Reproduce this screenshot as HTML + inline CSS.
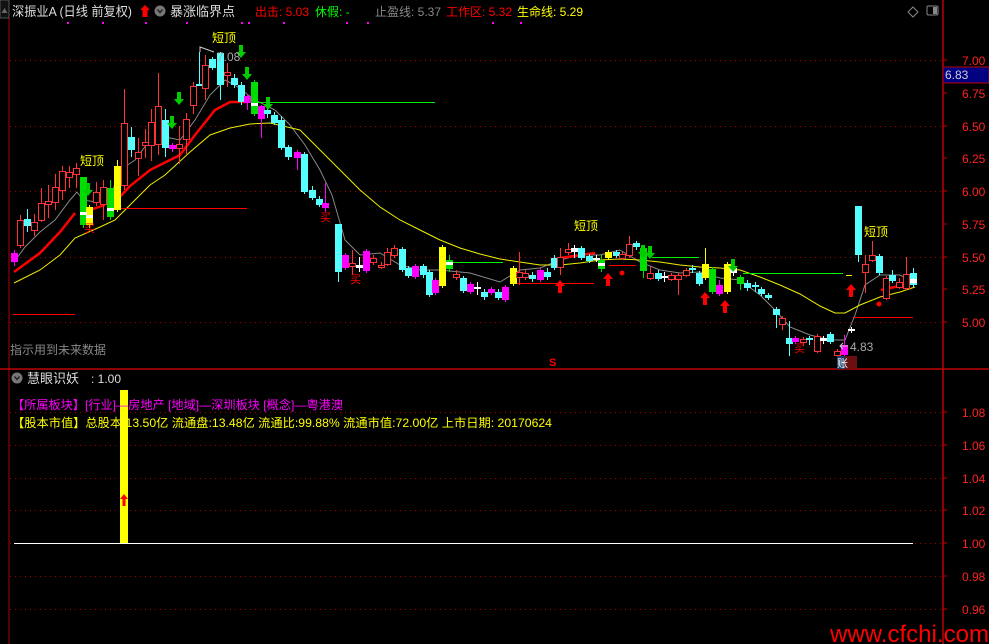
<!DOCTYPE html><html><head><meta charset="utf-8"><style>
html,body{margin:0;padding:0;background:#000;width:989px;height:644px;overflow:hidden}
svg{display:block}
text{font-family:"Liberation Sans","Noto Sans CJK SC",sans-serif}
</style></head><body>
<svg id="s" width="989" height="644" xmlns="http://www.w3.org/2000/svg">
<rect width="989" height="644" fill="#000"/>
<g id="grid"></g>
<g id="lines"></g>
<g id="c"></g>
<g id="ov"></g>
<line x1="9" y1="0" x2="9" y2="644" stroke="#b00000"/>
<line x1="943" y1="0" x2="943" y2="644" stroke="#c00000" stroke-width="1.5"/>
<line x1="0" y1="369" x2="989" y2="369" stroke="#c00000" stroke-width="1.5"/>
<rect x="0" y="0" width="9" height="18" fill="#111" stroke="#555"/>
<path d="M1.5 13 L4.5 8 L7.5 13Z" fill="#666"/>
<text x="12" y="16" font-size="13" fill="#ddd" textLength="120" lengthAdjust="spacingAndGlyphs">深振业A (日线 前复权)</text>
<path d="M145 5 L150 10 L147.5 10 L147.5 17 L142.5 17 L142.5 10 L140 10Z" fill="#f00"/>
<circle cx="160" cy="11" r="5.5" fill="#777"/><path d="M157.5 9.5 L160 12.5 L162.5 9.5" stroke="#222" stroke-width="1.4" fill="none"/>
<text x="170" y="16" font-size="13" fill="#ddd">暴涨临界点</text>
<text x="255" y="16" font-size="12" fill="#f00">出击: 5.03</text>
<text x="315" y="16" font-size="12" fill="#0f0">休假: -</text>
<text x="375" y="16" font-size="12" fill="#888">止盈线: 5.37</text>
<text x="446" y="16" font-size="12" fill="#f00">工作区: 5.32</text>
<text x="517" y="16" font-size="12" fill="#ff0">生命线: 5.29</text>
<g fill="#f0f"><rect x="67" y="22" width="2" height="2"/><rect x="102" y="22" width="2" height="2"/><rect x="145" y="22" width="2" height="2"/><rect x="186" y="22" width="2" height="2"/><rect x="241" y="22" width="2" height="2"/><rect x="248" y="22" width="2" height="2"/><rect x="283" y="22" width="2" height="2"/><rect x="346" y="22" width="2" height="2"/><rect x="367" y="22" width="2" height="2"/><rect x="492" y="22" width="2" height="2"/><rect x="520" y="22" width="2" height="2"/></g>
<path d="M913 7 L918 12 L913 17 L908 12Z" fill="none" stroke="#888"/>
<rect x="927" y="6" width="11" height="9" rx="1.5" fill="none" stroke="#888"/><rect x="933" y="7" width="4" height="7" fill="#888"/>
<g id="ax" font-size="12" fill="#f22"></g>
<rect x="943" y="67" width="46" height="16" fill="#000080" stroke="#c00000"/>
<text x="945" y="79" font-size="12" fill="#ccd">6.83</text>
<g font-size="12" fill="#ff0"><text x="80" y="165">短顶</text><text x="212" y="42">短顶</text><text x="574" y="230">短顶</text><text x="864" y="236">短顶</text></g>
<g font-size="11" fill="#f00"><text x="84" y="232">买</text><text x="320" y="221">买</text><text x="350" y="283">买</text><text x="794" y="352">买</text></g>
<text x="217" y="61" font-size="12" fill="#aaa">7.08</text>
<path d="M200 52 L200 47 L214 52" stroke="#ccc" fill="none"/>
<text x="850" y="351" font-size="12" fill="#aaa">4.83</text>
<path d="M848 346 L840 346 M843 343 L840 346 L843 349" stroke="#ccc" fill="none"/>
<text x="549" y="366" font-size="11" fill="#f00" font-weight="bold">S</text>
<rect x="837" y="356" width="8" height="13" fill="#1a3a6a"/><rect x="845" y="356" width="12" height="13" fill="#6a1010"/>
<text x="837" y="367" font-size="11" fill="#fff">账</text>
<text x="10" y="354" font-size="12" fill="#888">指示用到未来数据</text>
<circle cx="17" cy="378" r="5.5" fill="#777"/><path d="M14.5 376.5 L17 379.5 L19.5 376.5" stroke="#222" stroke-width="1.4" fill="none"/>
<text x="27" y="383" font-size="13" fill="#ddd">慧眼识妖</text>
<text x="91" y="383" font-size="12" fill="#ddd">: 1.00</text>
<rect x="120" y="390" width="8" height="154" fill="#ff0"/>
<text x="12" y="409" font-size="12" fill="#f0f" textLength="331" lengthAdjust="spacingAndGlyphs">【所属板块】[行业]—房地产 [地域]—深圳板块 [概念]—粤港澳</text>
<text x="12" y="427" font-size="12" fill="#ff0" textLength="540" lengthAdjust="spacingAndGlyphs">【股本市值】总股本:13.50亿 流通盘:13.48亿 流通比:99.88% 流通市值:72.00亿 上市日期: 20170624</text>
<rect x="120" y="416" width="8" height="3" fill="#ff0"/>
<path d="M124 494 L128 499 L125.5 499 L125.5 506 L122.5 506 L122.5 499 L120 499Z" fill="#f00"/>
<line x1="14" y1="543.5" x2="913" y2="543.5" stroke="#fff"/>
<text x="830" y="642" font-size="24" fill="#f00" textLength="159" lengthAdjust="spacingAndGlyphs">www.cfchi.com</text>
</svg>
<script>
var NS="http://www.w3.org/2000/svg";
function el(p,t,a){var e=document.createElementNS(NS,t);for(var k in a)e.setAttribute(k,a[k]);document.getElementById(p).appendChild(e);return e;}
[60,126,191,257,322].forEach(function(y){el("grid","line",{x1:10,y1:y+.5,x2:943,y2:y+.5,stroke:"#a00000","stroke-dasharray":"1 4"});});
[412,445,478,510,543,576,609].forEach(function(y){el("grid","line",{x1:10,y1:y+.5,x2:943,y2:y+.5,stroke:"#a00000","stroke-dasharray":"1 4"});});
var up=[["7.00",60],["6.75",93],["6.50",126],["6.25",158],["6.00",191],["5.75",224],["5.50",257],["5.25",289],["5.00",322]];
up.forEach(function(a){el("ax","text",{x:962,y:a[1]+5}).textContent=a[0];el("ax","line",{x1:943,y1:a[1],x2:947,y2:a[1],stroke:"#c00"});});
var lo=[["1.08",412],["1.06",445],["1.04",478],["1.02",510],["1.00",543],["0.98",576],["0.96",609]];
lo.forEach(function(a){el("ax","text",{x:962,y:a[1]+5}).textContent=a[0];el("ax","line",{x1:943,y1:a[1],x2:947,y2:a[1],stroke:"#c00"});});
function pl(pts,col,w){el("lines","polyline",{points:pts.map(function(p){return p.join(",")}).join(" "),fill:"none",stroke:col,"stroke-width":w});}
pl([[14,262],[25,247],[40,232],[55,220],[70,200],[77,192],[83,200],[96,202],[110,198],[120,170],[135,160],[150,140],[165,137],[180,140],[195,120],[210,95],[225,80],[235,85],[255,100],[275,110],[290,125],[305,145],[320,170],[332,195],[345,240],[360,255],[380,253],[400,265],[420,270],[440,270],[470,273],[500,282],[520,270],[540,268],[560,260],[580,255],[600,255],[620,250],[640,262],[660,270],[680,273],[700,272],[720,278],[740,280],[760,295],[775,310],[790,327],[810,335],[830,340],[845,340],[855,315],[865,285],[880,275],[900,275],[915,283]],"#888",1);
pl([[14,283],[40,270],[60,255],[75,238],[100,227],[115,220],[130,205],[150,185],[165,175],[190,152],[210,135],[230,128],[250,124],[270,123],[300,130],[320,150],[340,170],[360,190],[380,207],[400,220],[420,230],[440,240],[460,248],[480,254],[500,259],[520,262],[540,265],[560,265],[580,263],[600,260],[620,259],[640,260],[660,262],[680,265],[700,267],[720,268],[740,270],[760,277],[780,285],[800,294],[820,306],[835,313],[845,313],[860,305],[880,297],[900,292],[915,287]],"#ee0",1);
pl([[14,272],[40,253],[60,232],[75,213]],"#f00",2.5);
pl([[90,210],[105,205]],"#f00",2.5);
pl([[117,200],[130,186],[150,170],[170,160],[180,155],[195,135],[215,110],[230,102],[248,102]],"#f00",2.5);
pl([[560,258],[595,253]],"#f00",2.5);
pl([[881,290],[913,283]],"#f00",2.5);
function hl(x1,x2,y,c){el("lines","line",{x1:x1,y1:y+.5,x2:x2,y2:y+.5,stroke:c});}
hl(247,435,102,"#0e0");hl(110,247,208,"#f00");hl(13,75,314,"#f00");hl(449,503,262,"#0e0");hl(514,594,283,"#f00");hl(609,636,265,"#f00");hl(652,699,257,"#0e0");hl(743,843,273,"#0e0");hl(853,913,317,"#f00");hl(846,852,275,"#ee0");
var C=[[14,253,262,250,266,"m"],[20,220,245,215,248,"r"],[27,219,226,209,232,"c"],[34,222,230,214,236,"r"],[41,203,220,188,222,"r"],[48,201,204,185,218,"r"],[55,187,202,174,210,"r"],[62,171,190,166,200,"r"],[69,172,177,166,188,"r"],[76,168,174,163,188,"r"],[83,177,225,177,228,"g"],[89,207,225,205,228,"y"],[96,192,202,182,206,"r"],[103,187,204,180,220,"r"],[110,188,217,180,220,"g"],[117,166,210,160,212,"y"],[124,123,185,89,190,"r"],[131,137,150,127,157,"c"],[138,152,158,138,176,"r"],[145,142,145,129,158,"r"],[151,122,145,109,161,"r"],[158,106,144,73,155,"r"],[165,120,148,109,157,"c"],[172,145,149,143,152,"m"],[179,144,148,126,164,"r"],[186,119,139,113,154,"r"],[193,86,105,82,114,"r"],[199,84,86,52,86,"c"],[205,65,88,55,100,"r"],[212,59,68,57,70,"c"],[220,53,85,52,100,"c"],[227,72,75,63,87,"r"],[234,78,85,74,88,"c"],[241,85,102,82,105,"c"],[247,96,103,94,110,"m"],[254,82,114,80,116,"g"],[261,106,119,105,138,"m"],[267,110,114,107,118,"c"],[274,115,123,112,125,"c"],[281,120,148,116,150,"c"],[288,147,157,145,160,"c"],[297,152,158,150,170,"m"],[304,154,192,152,194,"c"],[312,190,198,186,200,"c"],[319,199,205,196,207,"c"],[325,203,208,183,212,"m"],[338,224,272,224,282,"c"],[345,255,268,253,270,"m"],[352,263,266,250,275,"r"],[359,265,268,257,272,"w"],[366,251,271,249,273,"m"],[373,258,262,255,265,"r"],[381,265,267,262,269,"r"],[387,252,264,248,266,"r"],[394,248,255,245,258,"r"],[402,249,270,247,272,"c"],[408,268,276,266,278,"c"],[415,266,277,264,279,"m"],[423,266,275,264,278,"c"],[429,272,295,270,297,"c"],[435,280,293,278,295,"m"],[442,247,286,245,288,"y"],[449,260,269,255,272,"g"],[456,274,277,270,280,"r"],[463,278,291,276,293,"c"],[470,284,292,282,294,"m"],[477,287,289,282,295,"w"],[484,292,297,289,300,"c"],[491,289,293,287,295,"m"],[498,292,298,289,300,"c"],[505,287,300,285,302,"m"],[513,268,284,266,286,"y"],[519,272,277,252,285,"r"],[525,273,277,270,280,"r"],[532,275,279,272,282,"c"],[540,270,280,268,282,"m"],[547,272,277,268,280,"c"],[554,258,268,255,270,"c"],[560,257,267,248,275,"r"],[568,249,252,243,255,"r"],[574,248,252,245,258,"w"],[581,248,258,246,260,"c"],[589,256,261,254,263,"c"],[596,258,260,255,262,"w"],[601,260,269,255,272,"g"],[608,252,258,250,260,"y"],[616,252,256,250,258,"c"],[622,254,258,252,260,"r"],[629,244,255,236,258,"r"],[636,243,247,241,250,"c"],[643,248,271,246,278,"g"],[650,273,278,267,280,"r"],[658,273,279,270,281,"c"],[664,276,278,272,282,"w"],[671,275,279,273,281,"r"],[678,275,279,273,295,"r"],[686,270,275,268,277,"r"],[692,268,270,265,273,"c"],[699,273,284,271,286,"c"],[705,264,278,248,280,"y"],[712,269,292,267,294,"g"],[719,285,294,280,296,"m"],[727,264,292,262,294,"y"],[733,268,273,262,276,"w"],[740,277,284,275,290,"g"],[747,283,288,280,291,"c"],[755,285,287,282,292,"c"],[761,289,294,287,296,"c"],[768,295,298,293,300,"c"],[776,309,315,307,328,"c"],[782,318,324,316,330,"r"],[789,338,344,321,356,"c"],[795,338,342,336,344,"m"],[803,339,342,337,346,"r"],[809,338,340,336,345,"c"],[817,336,351,334,353,"r"],[823,338,341,336,344,"w"],[830,334,342,332,344,"c"],[837,351,355,349,357,"r"],[844,345,355,335,357,"m"],[851,329,331,327,333,"w"],[858,206,255,206,262,"c"],[865,264,272,255,293,"r"],[872,255,260,241,262,"r"],[879,256,273,254,275,"c"],[886,278,298,276,300,"r"],[892,275,281,270,283,"c"],[899,282,287,278,289,"r"],[906,274,288,257,290,"r"],[913,273,285,268,287,"c"],[913,279,283,278,284,"w"]];
var col={r:"#f33",c:"#5ff",m:"#f0f",g:"#0d0",y:"#ff0",w:"#fff"};
C.forEach(function(k){var x=k[0],cc=col[k[5]];
 el("c","line",{x1:x+.5,y1:k[3],x2:x+.5,y2:k[4],stroke:cc});
 if(k[5]=="r"){el("c","rect",{x:x-2.5,y:k[1]+.5,width:6,height:Math.max(1,k[2]-k[1]),fill:"#000",stroke:cc});}
 else el("c","rect",{x:x-3,y:k[1],width:7,height:Math.max(1.5,k[2]-k[1]),fill:cc});
});
[[83,212],[254,103],[110,208],[449,262],[601,263],[89,215]].forEach(function(a){el("c","rect",{x:a[0]-3,y:a[1],width:7,height:3,fill:"#fff"});});
function ua(x,y){el("ov","path",{d:"M"+x+" "+y+" l5 6 h-3 v7 h-4 v-7 h-3z",fill:"#f00"});}
[[560,280],[608,273],[705,292],[725,300],[851,284]].forEach(function(a){ua(a[0],a[1]);});
function da(x,y){el("ov","path",{d:"M"+x+" "+(y+13)+" l5 -6 h-3 v-7 h-4 v7 h-3z",fill:"#0c0"});}
[[88,183],[172,116],[179,92],[241,45],[247,67],[268,97],[643,245],[650,246],[733,259]].forEach(function(a){da(a[0],a[1]);});
[[622,273],[879,304]].forEach(function(a){el("ov","circle",{cx:a[0],cy:a[1],r:2.5,fill:"#f00"});});
</script>
</body></html>
